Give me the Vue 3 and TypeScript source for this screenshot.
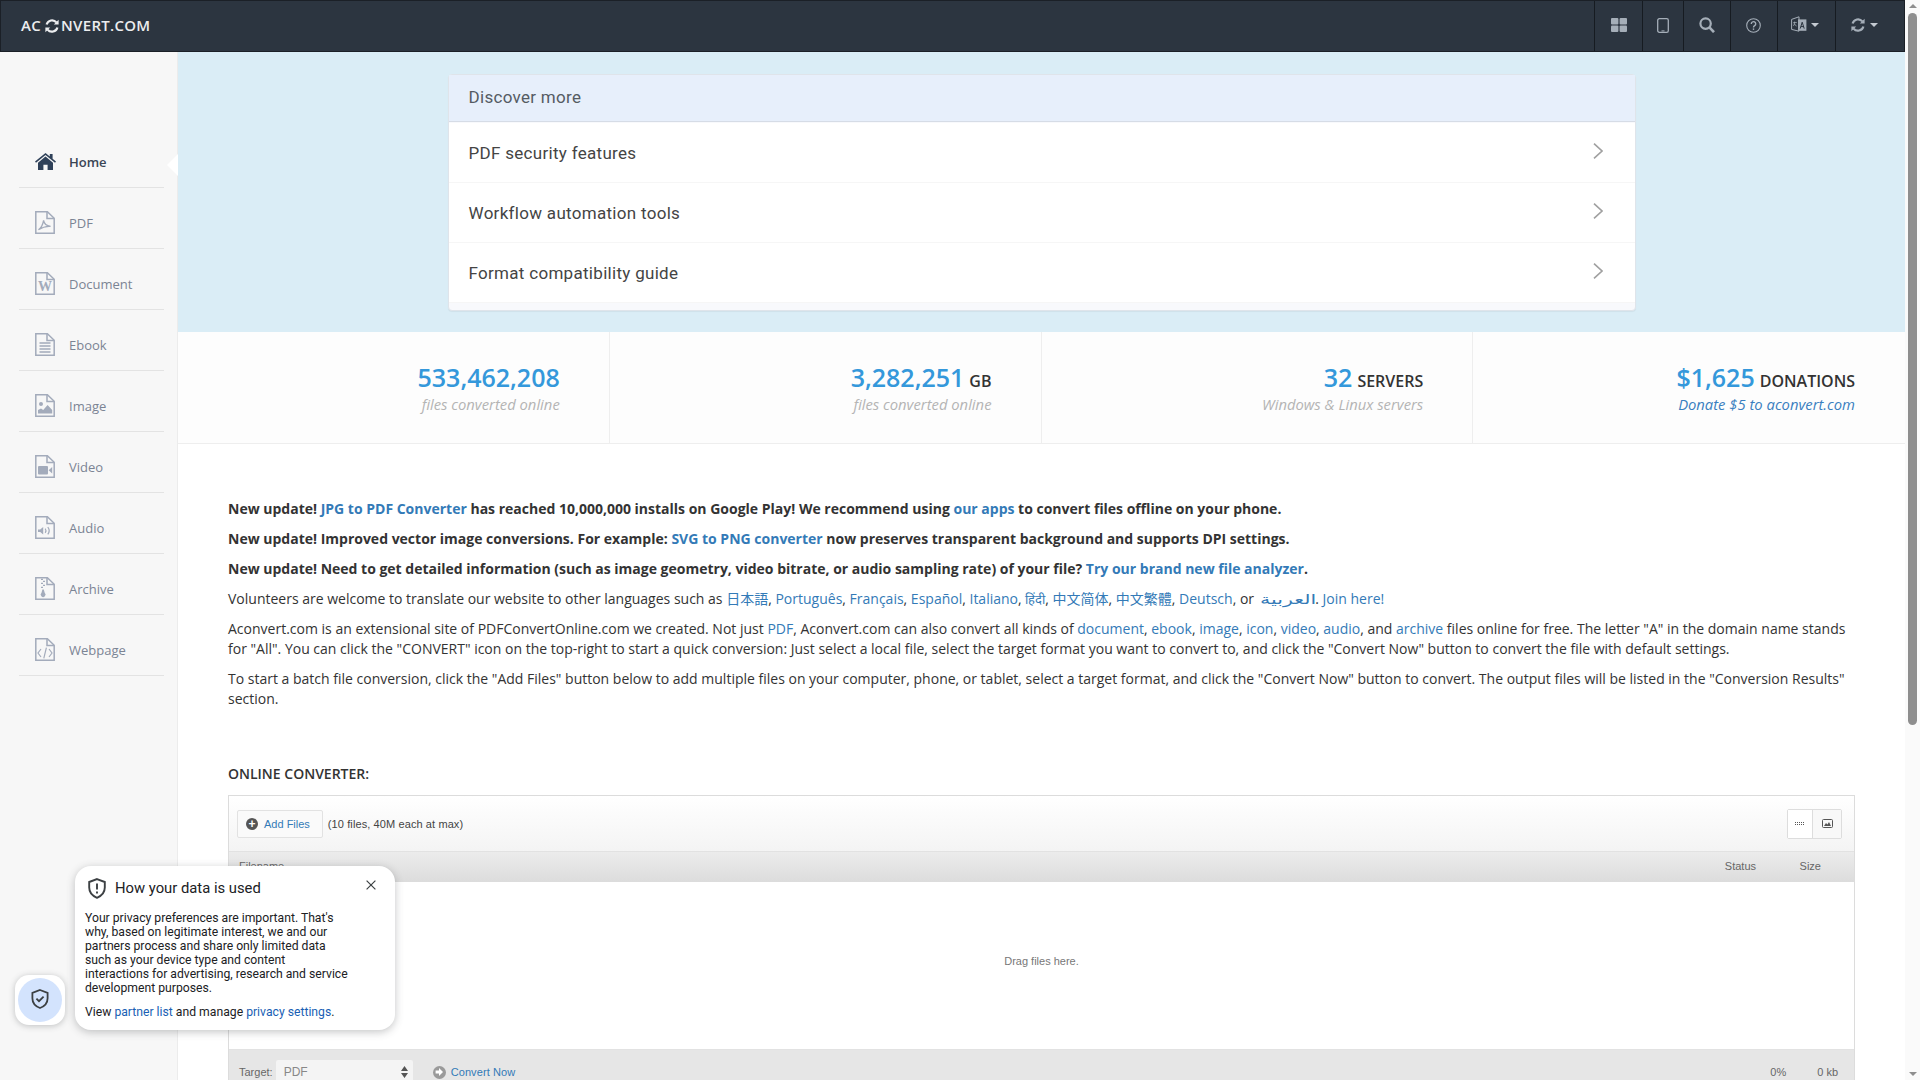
<script setup lang="ts">
type NavItem = { label: string; kind: string };

const navItems: NavItem[] = [
  { label: 'PDF', kind: 'pdf' },
  { label: 'Document', kind: 'doc' },
  { label: 'Ebook', kind: 'ebook' },
  { label: 'Image', kind: 'image' },
  { label: 'Video', kind: 'video' },
  { label: 'Audio', kind: 'audio' },
  { label: 'Archive', kind: 'archive' },
  { label: 'Webpage', kind: 'web' },
];

const discover = ['PDF security features', 'Workflow automation tools', 'Format compatibility guide'];

const stats = [
  { value: '533,462,208', unit: '', note: 'files converted online', link: false },
  { value: '3,282,251', unit: 'GB', note: 'files converted online', link: false },
  { value: '32', unit: 'SERVERS', note: 'Windows & Linux servers', link: false },
  { value: '$1,625', unit: 'DONATIONS', note: 'Donate $5 to aconvert.com', link: true },
];
</script>

<template>
  <div class="page">
    <div class="main">
      <header class="topbar">
        <div class="logo">
          AC<svg class="logo-sync" viewBox="0 0 16 16" width="16" height="16">
            <path d="M2.6 6.6A5.6 5.6 0 0 1 12.4 4.4" fill="none" stroke="currentColor" stroke-width="2.2" />
            <path d="M14.6 1.8v4.8H9.8z" fill="currentColor" />
            <path d="M13.4 9.4A5.6 5.6 0 0 1 3.6 11.6" fill="none" stroke="currentColor" stroke-width="2.2" />
            <path d="M1.4 14.2V9.4h4.8z" fill="currentColor" />
          </svg>NVERT.COM
        </div>
        <nav class="tools">
          <a class="tool tool--grid">
            <svg viewBox="0 0 16 14" width="16" height="14" fill="currentColor">
              <rect x="0" y="0" width="7.4" height="6.4" rx="1" />
              <rect x="8.6" y="0" width="7.4" height="6.4" rx="1" />
              <rect x="0" y="7.6" width="7.4" height="6.4" rx="1" />
              <rect x="8.6" y="7.6" width="7.4" height="6.4" rx="1" />
            </svg>
          </a>
          <a class="tool tool--tablet">
            <svg viewBox="0 0 12 15" width="12" height="15">
              <rect x="0.7" y="0.7" width="10.6" height="13.6" rx="1.6" fill="none" stroke="currentColor" stroke-width="1.3" />
              <rect x="4.5" y="12.4" width="3" height="1" fill="currentColor" />
            </svg>
          </a>
          <a class="tool tool--search">
            <svg viewBox="0 0 16 16" width="16" height="16" fill="none" stroke="currentColor">
              <circle cx="6.6" cy="6.6" r="5.2" stroke-width="2.2" />
              <path d="M10.4 10.4l4.6 4.8" stroke-width="2.6" />
            </svg>
          </a>
          <a class="tool tool--help">
            <svg viewBox="0 0 15 15" width="15" height="15" fill="none" stroke="currentColor">
              <circle cx="7.5" cy="7.5" r="6.8" stroke-width="1.1" />
              <path d="M5.3 5.9a2.2 2.2 0 1 1 3.4 1.8c-.8.5-1.2.9-1.2 1.8" stroke-width="1.4" />
              <rect x="6.8" y="10.4" width="1.4" height="1.5" fill="currentColor" stroke="none" />
            </svg>
          </a>
          <a class="tool tool--lang">
            <svg viewBox="0 0 16 18" width="16" height="18">
              <path d="M0.6 3.4l7.4-2.6v14.4L0.6 13.4z" fill="none" stroke="currentColor" stroke-width="1" />
              <path d="M7 3.4h8.4v11.4H7z" fill="currentColor" />
              <path d="M9.2 12.6l2-6.4 2 6.4M10 10.6h2.4" fill="none" stroke="#2c3540" stroke-width="1" />
              <path d="M2.2 6.6h3.6M3.6 5.6c0 2.4-.6 3.6-1.4 4.4M3.2 7.6c.6 1.2 1.4 2 2.4 2.4" fill="none" stroke="currentColor" stroke-width=".8" />
            </svg>
            <span class="caret"></span>
          </a>
          <a class="tool tool--sync">
            <svg viewBox="0 0 16 16" width="16" height="16">
              <path d="M2.6 6.6A5.6 5.6 0 0 1 12.4 4.4" fill="none" stroke="currentColor" stroke-width="2.2" />
              <path d="M14.6 1.8v4.8H9.8z" fill="currentColor" />
              <path d="M13.4 9.4A5.6 5.6 0 0 1 3.6 11.6" fill="none" stroke="currentColor" stroke-width="2.2" />
              <path d="M1.4 14.2V9.4h4.8z" fill="currentColor" />
            </svg>
            <span class="caret"></span>
          </a>
        </nav>
      </header>

      <div class="body-row">
        <aside class="sidebar">
          <a class="nav-item nav-item--active">
            <svg class="nav-icon" viewBox="0 0 21 17" width="21" height="17" fill="currentColor">
              <path d="M10.5 0L0 8.6l1 1.2L10.5 2l9.5 7.8 1-1.2-3.4-2.8V1h-2.8v2.5z" />
              <path d="M10.5 3.6L3 9.8V17h5.4v-5.2h4.2V17H18V9.8z" />
            </svg>
            <span>Home</span>
          </a>
          <a v-for="item in navItems" :key="item.kind" class="nav-item">
            <svg class="nav-icon" viewBox="0 0 20 23" width="20" height="23">
              <path d="M.8.8h11.6l6.8 6.4v15H.8z" fill="none" stroke="currentColor" stroke-width="1.5" />
              <path d="M12 1v6.4h7" fill="none" stroke="currentColor" stroke-width="1.5" />
              <path v-if="item.kind === 'pdf'" d="M3.4 18.8c2.4-1.4 4.4-5 5.2-9.4.4 3 2.2 5.4 7 6-3.6-.4-7.8.6-12.2 3.4z" fill="none" stroke="currentColor" stroke-width="1.3" />
              <text v-if="item.kind === 'doc'" x="10" y="19" text-anchor="middle" class="doc-w">W</text>
              <path v-if="item.kind === 'ebook'" d="M4.5 10h11M4.5 13h11M4.5 16h11M4.5 19h11" fill="none" stroke="currentColor" stroke-width="1.4" />
              <template v-if="item.kind === 'image'">
                <circle cx="6" cy="10" r="2" fill="currentColor" />
                <path d="M3 19.5v-3.5l3-1.6 2.2 1.6 4.4-5 4.6 5v3.5z" fill="currentColor" />
              </template>
              <template v-if="item.kind === 'video'">
                <rect x="3" y="11" width="10" height="8.4" rx="1" fill="currentColor" />
                <path d="M13.6 15.2l3.6-3.2v6.4z" fill="currentColor" />
              </template>
              <template v-if="item.kind === 'audio'">
                <path d="M3 13.4h2.2l3-2.4v7.4l-3-2.4H3z" fill="currentColor" />
                <path d="M10.2 12.6c1 1.4 1 2.8 0 4.2M12.8 11c1.8 2.4 1.8 5 0 7.4" fill="none" stroke="currentColor" stroke-width="1.2" />
              </template>
              <template v-if="item.kind === 'archive'">
                <path d="M6 2.4h2M8 4.4h2M6 6.4h2M8 8.4h2M6 10.4h2" fill="none" stroke="currentColor" stroke-width="1.2" />
                <path d="M7.4 12.4h1.4l.9 3.4a2.4 2.4 0 1 1-3.2 0z" fill="currentColor" />
              </template>
              <path v-if="item.kind === 'web'" d="M6 11l-3 4 3 4M14 11l3 4-3 4M11.4 9.6l-2.6 10.8" fill="none" stroke="currentColor" stroke-width="1.2" />
            </svg>
            <span>{{ item.label }}</span>
          </a>
        </aside>

        <main class="content">
          <section class="hero">
            <div class="panel">
              <div class="panel-head">Discover more</div>
              <a v-for="row in discover" :key="row" class="panel-row">
                <span>{{ row }}</span>
                <svg viewBox="0 0 10 16" width="10" height="16" fill="none" stroke="#a0a0a0" stroke-width="1.6">
                  <path d="M1 .6l8 7.4-8 7.4" />
                </svg>
              </a>
            </div>
          </section>

          <section class="stats">
            <div v-for="stat in stats" :key="stat.value" class="stat">
              <div class="stat-top">
                <span class="stat-value">{{ stat.value }}</span>
                <span v-if="stat.unit" class="stat-unit">{{ stat.unit }}</span>
              </div>
              <div class="stat-note" :class="{ 'stat-note--link': stat.link }">{{ stat.note }}</div>
            </div>
          </section>

          <section class="article">
            <p><b>New update! <a>JPG to PDF Converter</a> has reached 10,000,000 installs on Google Play! We recommend using <a>our apps</a> to convert files offline on your phone.</b></p>
            <p><b>New update! Improved vector image conversions. For example: <a>SVG to PNG converter</a> now preserves transparent background and supports DPI settings.</b></p>
            <p><b>New update! Need to get detailed information (such as image geometry, video bitrate, or audio sampling rate) of your file? <a>Try our brand new file analyzer</a>.</b></p>
            <p>Volunteers are welcome to translate our website to other languages such as <a>日本語</a>, <a>Português</a>, <a>Français</a>, <a>Español</a>, <a>Italiano</a>, <a class="hindi">हिंदी</a>, <a>中文简体</a>, <a>中文繁體</a>, <a>Deutsch</a>, or <a class="arabic">العربية</a>. <a>Join here!</a></p>
            <p>Aconvert.com is an extensional site of PDFConvertOnline.com we created. Not just <a>PDF</a>, Aconvert.com can also convert all kinds of <a>document</a>, <a>ebook</a>, <a>image</a>, <a>icon</a>, <a>video</a>, <a>audio</a>, and <a>archive</a> files online for free. The letter "A" in the domain name stands for "All". You can click the "CONVERT" icon on the top-right to start a quick conversion: Just select a local file, select the target format you want to convert to, and click the "Convert Now" button to convert the file with default settings.</p>
            <p>To start a batch file conversion, click the "Add Files" button below to add multiple files on your computer, phone, or tablet, select a target format, and click the "Convert Now" button to convert. The output files will be listed in the "Conversion Results" section.</p>
            <h4 class="converter-title">ONLINE CONVERTER:</h4>

            <div class="uploader">
              <div class="up-head">
                <a class="add-btn">
                  <span class="add-plus">+</span>
                  Add Files
                </a>
                <span class="up-hint">(10 files, 40M each at max)</span>
                <div class="view-btns">
                  <span class="view-btn">
                    <svg viewBox="0 0 10 4" width="10" height="4" fill="#555">
                      <path d="M0 0h1v1H0zM2 0h1v1H2zM4 0h1v1H4zM6 0h1v1H6zM8 0h1v1H8zM0 2h1v1H0zM2 2h1v1H2zM4 2h1v1H4zM6 2h1v1H6zM8 2h1v1H8z" />
                    </svg>
                  </span>
                  <span class="view-btn view-btn--alt">
                    <svg viewBox="0 0 11 9" width="11" height="9">
                      <rect x=".5" y=".5" width="10" height="8" rx="1" fill="none" stroke="#555" />
                      <path d="M2 7l2-3 1.4 1.4L7 3l2 4z" fill="#555" />
                    </svg>
                  </span>
                </div>
              </div>
              <div class="up-cols">
                <span class="col-name">Filename</span>
                <span class="col-status">Status</span>
                <span class="col-size">Size</span>
              </div>
              <div class="up-drop">Drag files here.</div>
              <div class="up-foot">
                <span class="target-label">Target:</span>
                <span class="target-select">
                  PDF
                  <svg viewBox="0 0 7 12" width="7" height="12" fill="#555">
                    <path d="M3.5 0L7 5H0zM3.5 12L0 7h7z" />
                  </svg>
                </span>
                <a class="convert-btn">
                  <span class="convert-dot">
                    <svg viewBox="0 0 8 8" width="8" height="8" fill="#fff"><path d="M4 0l4 4-4 4V5.4H.6V2.6H4z" /></svg>
                  </span>
                  Convert Now
                </a>
                <span class="foot-pct">0%</span>
                <span class="foot-size">0 kb</span>
              </div>
            </div>
          </section>
        </main>
      </div>
    </div>

    <div class="scrollbar">
      <span class="sb-arrow sb-arrow--up"></span>
      <span class="sb-track"><span class="sb-thumb"></span></span>
      <span class="sb-arrow sb-arrow--down"></span>
    </div>

    <button class="privacy-fab" type="button">
      <span class="privacy-circle">
        <svg viewBox="0 0 18 20" width="18" height="20" fill="none" stroke="#3c4043" stroke-width="1.8">
          <path d="M9 1l7.6 2.8v5.4c0 4.6-3 8-7.6 9.8-4.6-1.8-7.6-5.2-7.6-9.8V3.8z" />
          <path d="M5.4 9.6l2.6 2.6 4.6-4.6" />
        </svg>
      </span>
    </button>

    <aside class="privacy-card">
      <div class="privacy-head">
        <svg viewBox="0 0 18 21" width="18" height="21" fill="none" stroke="#3c4043" stroke-width="1.9">
          <path d="M9 1.1l7.8 2.9v5.6c0 4.8-3.1 8.3-7.8 10.2-4.7-1.9-7.8-5.4-7.8-10.2V4z" />
          <path d="M9 5.6v6M9 13.4v2" />
        </svg>
        <span class="privacy-title">How your data is used</span>
        <svg class="privacy-close" viewBox="0 0 10 10" width="10" height="10" fill="none" stroke="#3c4043" stroke-width="1.2">
          <path d="M.6.6l8.8 8.8M9.4.6L.6 9.4" />
        </svg>
      </div>
      <p class="privacy-text">Your privacy preferences are important. That's why, based on legitimate interest, we and our partners process and share only limited data such as your device type and content interactions for advertising, research and service development purposes.</p>
      <p class="privacy-links">View <a>partner list</a> and manage <a>privacy settings</a>.</p>
    </aside>
  </div>
</template>

<style>
html,
body {
  margin: 0;
  height: 100%;
  overflow: hidden;
  background: #fff;
}
</style>

<style scoped>
.page {
  position: relative;
  display: flex;
  width: 1920px;
  height: 1080px;
  overflow: hidden;
  font-family: "Open Sans", "Noto Sans CJK JP", sans-serif;
  font-size: 14px;
  color: #333;
}

.main {
  width: 1905px;
  flex: none;
}

.topbar {
  box-sizing: border-box;
  display: flex;
  justify-content: space-between;
  height: 52px;
  background: #2c3540;
  border: 1px solid #1b2027;
}

.logo {
  display: flex;
  align-items: center;
  padding: 0 0 2px 20px;
  color: #ecedef;
  font-size: 15px;
  font-weight: 600;
  letter-spacing: 0.3px;
}

.logo-sync {
  margin: 2px 1px 0 3px;
}

.tools {
  display: flex;
}

.tool {
  box-sizing: border-box;
  display: flex;
  align-items: center;
  justify-content: center;
  gap: 4px;
  padding-bottom: 2px;
  color: #a5aeb8;
  border-left: 1px solid #161b21;
}

.tool--grid { width: 48px; }
.tool--tablet { width: 41px; }
.tool--search { width: 47px; }

.tool--help {
  width: 47px;
  padding-right: 1px;
}

.tool--lang {
  width: 58px;
  justify-content: flex-start;
  padding-left: 13px;
}

.tool--sync {
  width: 69px;
  justify-content: flex-start;
  padding-left: 14px;
}

.caret {
  width: 0;
  height: 0;
  border: 4px solid transparent;
  border-top-color: #c4cad1;
  border-bottom: 0;
}

.body-row {
  display: flex;
  height: 1028px;
}

.sidebar {
  box-sizing: border-box;
  flex: none;
  width: 178px;
  padding: 75px 13px 0 19px;
  background: #f7f7f7;
  border-right: 1px solid #ececec;
  position: relative;
}

.sidebar::after {
  content: "";
  position: absolute;
  right: -1px;
  top: 102px;
  border: 11px solid transparent;
  border-right-color: #fff;
  border-left: 0;
}

.nav-item {
  box-sizing: border-box;
  display: flex;
  align-items: center;
  gap: 14px;
  height: 61px;
  padding: 9px 0 0 16px;
  border-bottom: 1px solid #e3e3e3;
  color: #7b8494;
  font-size: 13px;
}

.nav-icon {
  flex: none;
  color: #a3abbb;
}

.nav-item--active {
  gap: 13px;
  color: #3a4555;
  font-weight: 600;
}

.nav-item--active .nav-icon {
  color: #2f4159;
}

.doc-w {
  font-family: "Liberation Serif", serif;
  font-size: 14px;
  font-weight: 700;
  fill: currentColor;
}

.content {
  flex: 1;
  min-width: 0;
}

.hero {
  display: flex;
  justify-content: center;
  height: 280px;
  padding-top: 22px;
  box-sizing: border-box;
  background: #daedf6;
}

.panel {
  box-sizing: border-box;
  width: 1188px;
  height: 237px;
  background: #f8f9fc;
  border: 1px solid #dfe4ea;
  border-radius: 4px;
  box-shadow: 0 1px 1px rgba(0, 0, 0, 0.05);
  font-family: Roboto, sans-serif;
  font-size: 17px;
  letter-spacing: 0.3px;
}

.panel-head {
  display: flex;
  align-items: center;
  box-sizing: border-box;
  height: 47px;
  padding: 0 20px 2px;
  background: #e7effb;
  border-bottom: 1px solid #d6dce6;
  color: #555b63;
  margin-bottom: 1px;
}

.panel-row {
  box-sizing: border-box;
  display: flex;
  align-items: center;
  justify-content: space-between;
  height: 60px;
  padding: 0 32px 0 20px;
  background: #fff;
  border-bottom: 1px solid #f6f6f6;
  color: #444;
}

.panel-row svg {
  margin-bottom: 4px;
}

.stats {
  display: grid;
  grid-template-columns: repeat(4, 1fr);
  height: 112px;
  border-bottom: 1px solid #eee;
  box-sizing: border-box;
  background: #fdfdfd;
}

.stat {
  padding: 30px 49px 0 0;
  text-align: right;
  border-right: 1px solid #eee;
}

.stat:last-child {
  padding-right: 50px;
  border-right: 0;
}

.stat-top {
  line-height: 30px;
}

.stat-value {
  font-size: 25px;
  font-weight: 600;
  color: #3498db;
}

.stat-unit {
  margin-left: 5px;
  font-size: 16px;
  font-weight: 600;
  color: #333;
}

.stat-note {
  margin-top: -3px;
  font-size: 14.8px;
  font-style: italic;
  font-weight: 400;
  color: #b4b4b4;
  line-height: 20px;
}

.stat-note--link {
  color: #3a7fc0;
}

.article {
  padding: 55px 50px 0 50px;
}

.article p {
  margin: 0 0 10px;
  line-height: 20px;
}

.article a {
  color: #337ab7;
}

.arabic {
  display: inline-block;
  margin: 0 20px 0 2px;
  font-family: "DejaVu Sans", sans-serif;
  font-size: 13px;
  line-height: 1;
  transform: scaleX(1.58);
  transform-origin: left center;
}

.hindi {
  font-size: 13px;
  line-height: 1;
}

.converter-title {
  margin: 55px 0 11px;
  font-size: 14px;
  font-weight: 600;
  line-height: 20px;
}

.uploader {
  border: 1px solid #dcdcdc;
  font-family: "Liberation Sans", Arial, sans-serif;
  font-size: 11px;
}

.up-head {
  display: flex;
  align-items: center;
  height: 56px;
  padding: 0 12px 0 8px;
  background: linear-gradient(#fff, #f4f4f4);
  box-sizing: border-box;
  border-bottom: 1px solid #e2e2e2;
}

.add-btn {
  display: flex;
  align-items: center;
  gap: 6px;
  box-sizing: border-box;
  height: 28px;
  padding: 0 12px 0 8px;
  background: #fafafa;
  border: 1px solid #e2e2e2;
  border-radius: 2px;
  color: #337ab7;
}

.add-plus {
  display: flex;
  align-items: center;
  justify-content: center;
  width: 12px;
  height: 12px;
  border-radius: 50%;
  background: #555;
  color: #fff;
  font-size: 12px;
  font-weight: 700;
  line-height: 1;
}

.up-hint {
  margin-left: 5px;
  color: #444;
  letter-spacing: 0.1px;
}

.view-btns {
  display: flex;
  margin-left: auto;
  height: 28px;
  border: 1px solid #ddd;
  border-radius: 2px;
}

.view-btn {
  display: flex;
  align-items: center;
  justify-content: center;
  width: 24px;
  background: #fff;
}

.view-btn--alt {
  width: 28px;
  background: #f8f8f8;
  border-left: 1px solid #ddd;
}

.up-cols {
  position: relative;
  height: 30px;
  line-height: 28px;
  background: linear-gradient(#ececec, #dcdcdc);
  color: #666;
}

.col-name {
  position: absolute;
  left: 10px;
}

.col-status {
  position: absolute;
  right: 98px;
}

.col-size {
  position: absolute;
  right: 33px;
}

.up-drop {
  display: flex;
  align-items: center;
  justify-content: center;
  height: 168px;
  padding-bottom: 10px;
  background: #fff;
  color: #777;
  box-sizing: border-box;
  border-bottom: 1px solid #e2e2e2;
}

.up-foot {
  box-sizing: border-box;
  display: flex;
  align-items: center;
  height: 42px;
  padding: 2px 16px 0 10px;
  background: #e6e6e6;
  color: #666;
}

.target-select {
  display: flex;
  align-items: center;
  justify-content: space-between;
  box-sizing: border-box;
  width: 137px;
  height: 24px;
  margin-left: 3px;
  padding: 0 5px 0 8px;
  background: #f4f4f4;
  border-radius: 2px;
  color: #888;
  font-size: 12px;
}

.convert-btn {
  display: flex;
  align-items: center;
  gap: 5px;
  margin-left: 20px;
  color: #8fb3d6;
  letter-spacing: 0.1px;
}

.convert-dot {
  display: flex;
  align-items: center;
  justify-content: center;
  width: 13px;
  height: 13px;
  border-radius: 50%;
  background: #9a9a9a;
}

.foot-pct {
  margin-left: auto;
}

.foot-size {
  margin-left: 31px;
}

.scrollbar {
  flex: none;
  width: 15px;
  display: flex;
  flex-direction: column;
  align-items: center;
  background: #fafafa;
}

.sb-arrow {
  flex: none;
  width: 0;
  height: 0;
  border: 4.5px solid transparent;
}

.sb-arrow--up {
  margin-top: 4px;
  border-top: 0;
  border-bottom-color: #8e8e8e;
}

.sb-arrow--down {
  margin-bottom: 4px;
  border-bottom: 0;
  border-top-color: #8e8e8e;
}

.sb-track {
  flex: 1;
  width: 100%;
  margin-top: 5px;
}

.sb-thumb {
  display: block;
  width: 9px;
  height: 712px;
  margin-left: 3px;
  border-radius: 5px;
  background: #8e8e8e;
}

.privacy-fab {
  position: absolute;
  left: 15px;
  top: 975px;
  display: flex;
  align-items: center;
  justify-content: center;
  width: 50px;
  height: 50px;
  padding: 0;
  border: 0;
  border-radius: 14px;
  background: #fff;
  box-shadow: 0 1px 6px rgba(60, 64, 67, 0.3);
}

.privacy-circle {
  display: flex;
  align-items: center;
  justify-content: center;
  width: 44px;
  height: 44px;
  padding-bottom: 2px;
  box-sizing: border-box;
  border-radius: 50%;
  background: #d3e3fd;
}

.privacy-card {
  position: absolute;
  left: 75px;
  top: 866px;
  box-sizing: border-box;
  width: 320px;
  height: 164px;
  padding: 10px 10px 0;
  border-radius: 16px;
  background: #fff;
  box-shadow: 0 2px 8px rgba(60, 64, 67, 0.3);
  font-family: Roboto, sans-serif;
  color: #202124;
}

.privacy-head {
  display: flex;
  align-items: center;
  gap: 9px;
  padding-left: 3px;
  height: 24px;
}

.privacy-title {
  font-size: 14.8px;
  font-weight: 400;
}

.privacy-close {
  position: absolute;
  right: 19px;
  top: 14px;
}

.privacy-text {
  width: 266px;
  margin: 11px 0 0;
  font-size: 12.2px;
  line-height: 14px;
}

.privacy-links {
  margin: 10px 0 0;
  font-size: 12.2px;
  line-height: 14px;
}

.privacy-links a {
  color: #1a5fb4;
}
</style>
